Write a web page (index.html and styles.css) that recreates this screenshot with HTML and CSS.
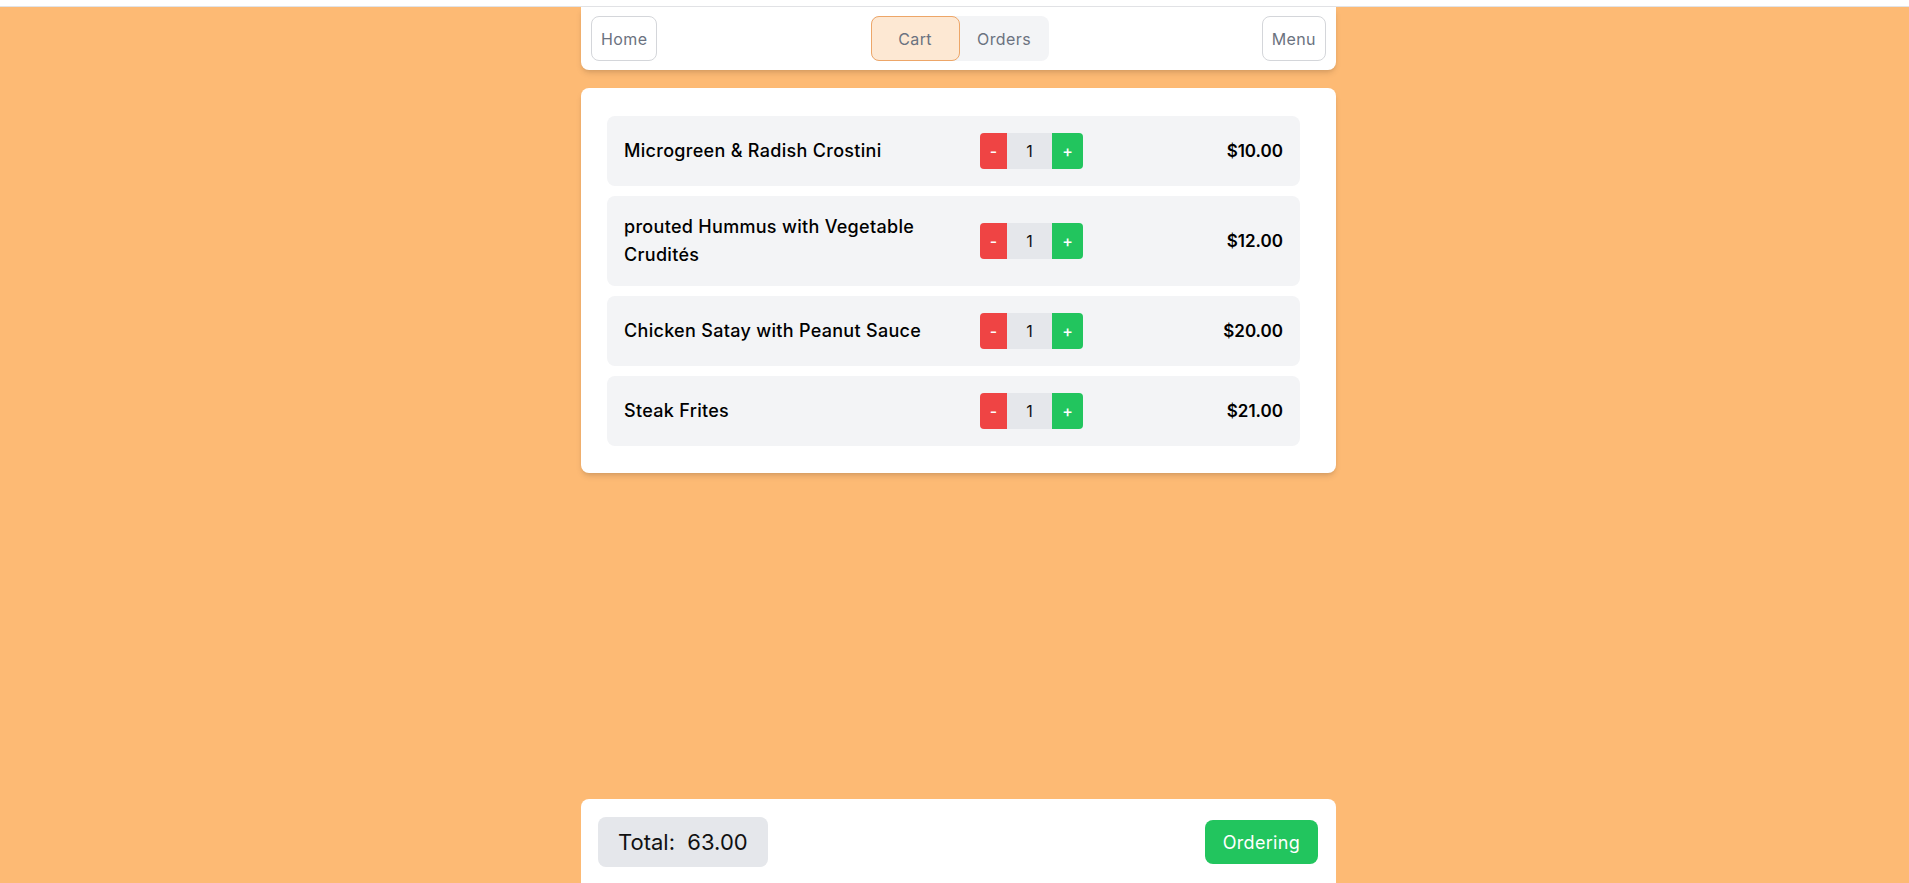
FILE: index.html
```html
<!DOCTYPE html>
<html lang="en">
<head>
<meta charset="utf-8">
<title>Cart</title>
<link rel="stylesheet" href="styles.css">
</head>
<body>
<div class="page">
  <div class="topstrip"></div>
  <div class="shell">
    <header class="navbar">
      <button class="nav-btn">Home</button>
      <div class="tabs">
        <button class="tab tab-active">Cart</button>
        <button class="tab">Orders</button>
      </div>
      <button class="nav-btn">Menu</button>
    </header>

    <main class="cart-card">
      <div class="item">
        <div class="item-name">Microgreen &amp; Radish Crostini</div>
        <div class="qty">
          <button class="qty-btn qty-minus">-</button>
          <span class="qty-val">1</span>
          <button class="qty-btn qty-plus">+</button>
        </div>
        <div class="item-price">$10.00</div>
      </div>
      <div class="item">
        <div class="item-name">prouted Hummus with Vegetable Crudités</div>
        <div class="qty">
          <button class="qty-btn qty-minus">-</button>
          <span class="qty-val">1</span>
          <button class="qty-btn qty-plus">+</button>
        </div>
        <div class="item-price">$12.00</div>
      </div>
      <div class="item">
        <div class="item-name">Chicken Satay with Peanut Sauce</div>
        <div class="qty">
          <button class="qty-btn qty-minus">-</button>
          <span class="qty-val">1</span>
          <button class="qty-btn qty-plus">+</button>
        </div>
        <div class="item-price">$20.00</div>
      </div>
      <div class="item">
        <div class="item-name">Steak Frites</div>
        <div class="qty">
          <button class="qty-btn qty-minus">-</button>
          <span class="qty-val">1</span>
          <button class="qty-btn qty-plus">+</button>
        </div>
        <div class="item-price">$21.00</div>
      </div>
    </main>

    <footer class="footer">
      <div class="total">Total:&nbsp; 63.00</div>
      <button class="order-btn">Ordering</button>
    </footer>
  </div>
</div>
</body>
</html>
```

FILE: styles.css
```css
* { box-sizing: border-box; }

html, body {
  margin: 0;
  padding: 0;
  height: 100%;
  overflow: hidden;
}

body {
  background: #fdba74;
  font-family: "Inter", "Noto Sans", sans-serif;
  color: #111;
}

button {
  font-family: inherit;
  cursor: pointer;
}

.page {
  height: 100vh;
  display: flex;
  flex-direction: column;
}

.topstrip {
  height: 7px;
  flex: 0 0 7px;
  background: #fff;
  border-bottom: 1px solid #e2e3e6;
}

.shell {
  flex: 1;
  display: flex;
  flex-direction: column;
  width: 755px;
  margin-left: calc(50% - 373.5px);
}

.navbar {
  background: #fff;
  border-radius: 0 0 8px 8px;
  box-shadow: 0 4px 6px -1px rgba(0,0,0,0.12), 0 2px 4px -2px rgba(0,0,0,0.1);
  padding: 9px 10px;
  display: flex;
  align-items: center;
  justify-content: space-between;
}

.nav-btn {
  height: 45px;
  background: #fff;
  border: 1px solid #d4d6da;
  border-radius: 8px;
  padding: 0 9px;
  font-size: 16px;
  letter-spacing: 0.4px;
  color: #6b7280;
}

.tabs {
  display: flex;
  background: #f3f4f6;
  border-radius: 8px;
}

.tab {
  width: 89px;
  height: 45px;
  border: 1px solid transparent;
  background: transparent;
  border-radius: 8px;
  font-size: 16px;
  letter-spacing: 0.4px;
  color: #6b7280;
}

.tab-active {
  background: #fde8d3;
  border-color: #eda668;
}

.cart-card {
  margin-top: 18px;
  background: #fff;
  border-radius: 8px;
  box-shadow: 0 4px 6px -1px rgba(0,0,0,0.12), 0 2px 4px -2px rgba(0,0,0,0.1);
  padding: 28px 36px 27px 26px;
  display: flex;
  flex-direction: column;
  gap: 10px;
}

.item {
  background: #f3f4f6;
  border-radius: 8px;
  padding: 17px;
  display: flex;
  align-items: center;
}

.item-name {
  flex: 0 0 356px;
  padding-right: 20px;
  font-size: 18px;
  letter-spacing: 0.3px;
  line-height: 28px;
  font-weight: 500;
  color: #000;
}

.qty {
  display: flex;
  height: 36px;
  border-radius: 4px;
  overflow: hidden;
}

.qty-btn {
  border: 0;
  color: #fff;
  font-size: 16px;
  font-weight: 500;
  padding: 0;
  height: 36px;
}

.qty-minus {
  width: 27px;
  background: #ef4444;
}

.qty-plus {
  width: 31px;
  background: #22c55e;
}

.qty-val {
  width: 45px;
  background: #e5e7eb;
  display: flex;
  align-items: center;
  justify-content: center;
  font-size: 16px;
  color: #111;
}

.item-price {
  flex: 1;
  text-align: right;
  font-size: 17px;
  font-weight: 600;
  color: #000;
}

.footer {
  margin-top: auto;
  height: 84px;
  background: #fff;
  border-radius: 8px 8px 0 0;
  padding: 18px 18px 0 17px;
  display: flex;
  align-items: flex-start;
  justify-content: space-between;
}

.total {
  height: 50px;
  background: #e5e7eb;
  border-radius: 8px;
  padding: 0 20px;
  display: flex;
  align-items: center;
  font-size: 22px;
  color: #111;
}

.order-btn {
  margin-top: 3px;
  height: 44px;
  border: 0;
  border-radius: 8px;
  background: #22c55e;
  color: #fff;
  font-size: 18px;
  letter-spacing: 0.3px;
  padding: 0 18px;
}
```
